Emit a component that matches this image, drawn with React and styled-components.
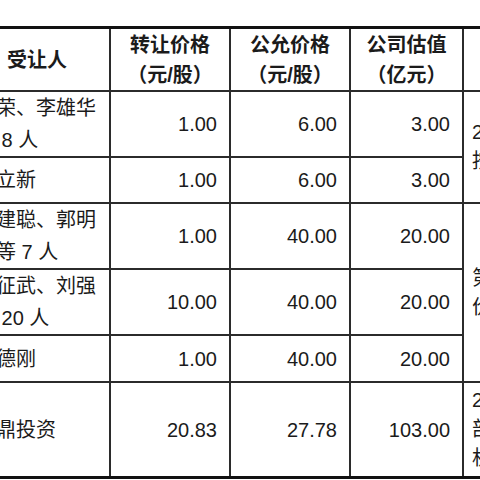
import React from "react";
import styled, { createGlobalStyle } from "styled-components";

const GlobalStyle = createGlobalStyle`
  html, body {
    margin: 0;
    padding: 0;
    background: #fff;
  }
  body {
    font-family: "Liberation Sans", "Noto Sans CJK SC", sans-serif;
    color: #1b1b1b;
  }
`;

const Page = styled.div`
  width: 480px;
  height: 480px;
  overflow: hidden;
  padding-top: 26px;
  box-sizing: border-box;
`;

const Table = styled.table`
  margin-left: -37px;
  width: 660px;
  table-layout: fixed;
  border-collapse: collapse;
  font-size: 20px;
  border-top: 3px solid #111;
  border-bottom: 3px solid #111;
`;

const Th = styled.th`
  height: 61px;
  padding: 0 4px;
  font-weight: 700;
  line-height: 30px;
  text-align: center;
  vertical-align: middle;
  border-left: 2px solid #2b2b2b;
  border-right: 2px solid #2b2b2b;
  border-bottom: 2px solid #2b2b2b;
`;

const Td = styled.td`
  height: ${(p) => p.$h}px;
  padding: 0 12px 0 11px;
  line-height: 32px;
  text-align: ${(p) => (p.$num ? "right" : "left")};
  vertical-align: middle;
  border: 2px solid #2b2b2b;
`;

const NoteTd = styled(Td)`
  padding: 0 8px;
  line-height: 29px;
  white-space: nowrap;
`;

const rows = [
  { name: "王荣、李雄华等 8 人", transfer: "1.00", fair: "6.00", value: "3.00", h: 62, note: ["2015 年员工持股，", "按净资产定价"], span: 2 },
  { name: "刘立新", transfer: "1.00", fair: "6.00", value: "3.00", h: 44 },
  { name: "陈建聪、郭明亮等 7 人", transfer: "1.00", fair: "40.00", value: "20.00", h: 62, note: ["第二次股权激励，", "价格参照评估值"], span: 3 },
  { name: "李征武、刘强等 20 人", transfer: "10.00", fair: "40.00", value: "20.00", h: 61 },
  { name: "张德刚", transfer: "1.00", fair: "40.00", value: "20.00", h: 45 },
  { name: "九鼎投资", transfer: "20.83", fair: "27.78", value: "103.00", h: 93, note: ["2018 年引入外", "部投资者，参照", "机构估值"], span: 1 },
];

export default function App() {
  return (
    <Page>
      <GlobalStyle />
      <Table>
        <colgroup>
          <col style={{ width: 146 }} />
          <col style={{ width: 120 }} />
          <col style={{ width: 120 }} />
          <col style={{ width: 113 }} />
          <col style={{ width: 161 }} />
        </colgroup>
        <thead>
          <tr>
            <Th>受让人</Th>
            <Th>转让价格<br />（元/股）</Th>
            <Th>公允价格<br />（元/股）</Th>
            <Th>公司估值<br />（亿元）</Th>
            <Th>定价依据</Th>
          </tr>
        </thead>
        <tbody>
          {rows.map((r) => (
            <tr key={r.name}>
              <Td $h={r.h}>{r.name}</Td>
              <Td $h={r.h} $num>{r.transfer}</Td>
              <Td $h={r.h} $num>{r.fair}</Td>
              <Td $h={r.h} $num>{r.value}</Td>
              {r.note && (
                <NoteTd rowSpan={r.span}>
                  {r.note.map((line, i) => (
                    <React.Fragment key={i}>
                      {i > 0 && <br />}
                      {line}
                    </React.Fragment>
                  ))}
                </NoteTd>
              )}
            </tr>
          ))}
        </tbody>
      </Table>
    </Page>
  );
}
